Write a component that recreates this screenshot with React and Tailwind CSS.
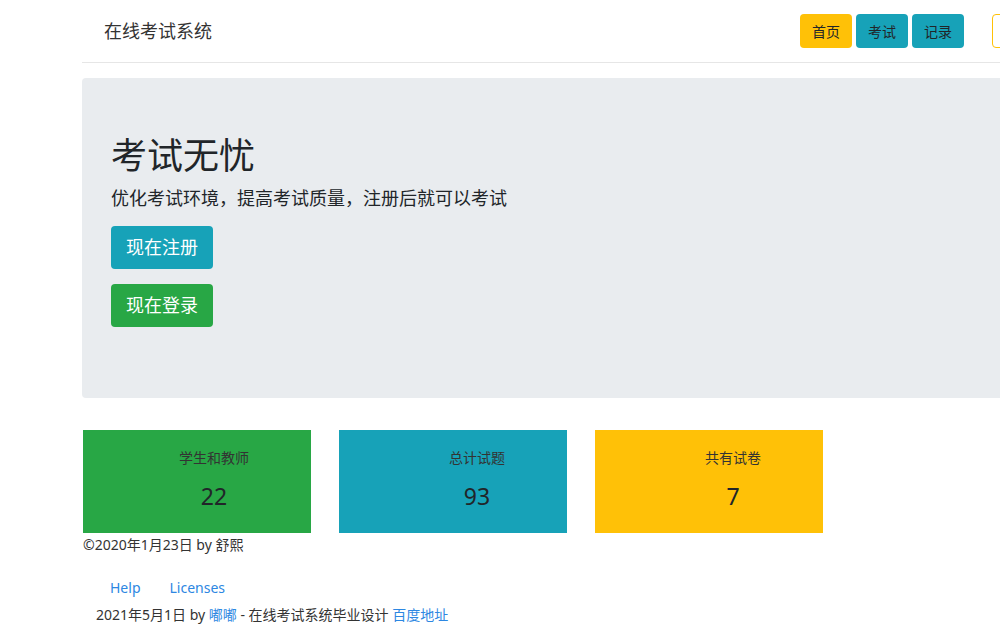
import React from 'react';

const stats = [
  { label: '学生和教师', value: '22', bg: 'bg-[#28a745]', pad: 'pl-[34px]' },
  { label: '总计试题', value: '93', bg: 'bg-[#17a2b8]', pad: 'pl-[48px]' },
  { label: '共有试卷', value: '7', bg: 'bg-[#ffc107]', pad: 'pl-[48px]' },
];

export default function App() {
  return (
    <div className="w-[1000px] h-[625px] overflow-hidden bg-white text-[#212529] font-['Noto_Sans','Noto_Sans_CJK_SC',sans-serif]">
      <div className="pl-[82px] w-[1200px]">
        {/* top nav */}
        <header className="h-[63px] border-b border-[#e6e6e6] flex items-center">
          <div className="w-[718px] pl-[22px] text-[18px] leading-[27px] text-[#333]">在线考试系统</div>
          <nav className="flex items-center gap-[4px]">
            <button className="h-[34px] px-[12px] rounded-[4px] bg-[#ffc107] text-[14px] text-[#212529]">首页</button>
            <button className="h-[34px] px-[12px] rounded-[4px] bg-[#17a2b8] text-[14px] text-[#212529]">考试</button>
            <button className="h-[34px] px-[12px] rounded-[4px] bg-[#17a2b8] text-[14px] text-[#212529]">记录</button>
            <button className="ml-[24px] h-[34px] px-[12px] rounded-[4px] border border-[#ffc107] text-[14px] text-[#212529]">登录</button>
          </nav>
        </header>

        {/* hero */}
        <section className="mt-[15px] w-[1000px] h-[320px] rounded-[4px] bg-[#e9ecef] pt-[56px] pl-[29px]">
          <h1 className="text-[36px] leading-[43px] text-[#212529]">考试无忧</h1>
          <p className="mt-[8px] text-[18px] leading-[27px] text-[#212529]">优化考试环境，提高考试质量，注册后就可以考试</p>
          <div className="mt-[14px] flex flex-col items-start gap-[15px]">
            <button className="h-[43px] w-[102px] rounded-[4px] bg-[#17a2b8] text-white text-[18px]">现在注册</button>
            <button className="h-[43px] w-[102px] rounded-[4px] bg-[#28a745] text-white text-[18px]">现在登录</button>
          </div>
        </section>

        {/* stats */}
        <div className="mt-[32px] flex gap-[28px] pl-[1px]">
          {stats.map((s) => (
            <div key={s.label} className={`w-[228px] h-[103px] ${s.bg} ${s.pad} pt-[17px] flex flex-col items-center`}>
              <div className="text-[14px] leading-[21px] text-[#333]">{s.label}</div>
              <div className="mt-[14px] text-[23px] leading-[29px] text-[#212529]">{s.value}</div>
            </div>
          ))}
        </div>

        {/* footer */}
        <p className="mt-[1px] pl-[1px] text-[14px] leading-[21px] text-[#333]">©2020年1月23日 by 舒熙</p>
        <div className="mt-[22px] pl-[28px] flex gap-[29px] text-[14px] leading-[21px] text-[#2d87e2]">
          <a>Help</a>
          <a>Licenses</a>
        </div>
        <p className="mt-[6px] pl-[14px] text-[14px] leading-[21px] text-[#333]">
          2021年5月1日 by <a className="text-[#2d87e2]">嘟嘟</a> - 在线考试系统毕业设计 <a className="text-[#2d87e2]">百度地址</a>
        </p>
      </div>
    </div>
  );
}
